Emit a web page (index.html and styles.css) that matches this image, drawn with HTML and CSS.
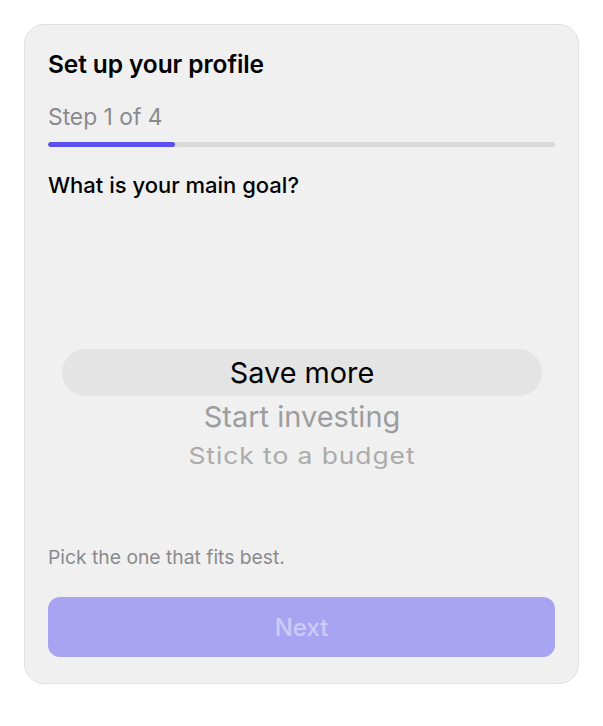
FILE: index.html
```html
<!DOCTYPE html>
<html lang="en">
<head>
<meta charset="utf-8">
<title>Set up your profile</title>
<link rel="stylesheet" href="styles.css">
</head>
<body>
<div class="card">
  <h1 class="title">Set up your profile</h1>
  <div class="step">Step 1 of 4</div>
  <div class="track"><div class="fill" style="width:25%"></div></div>
  <h2 class="question">What is your main goal?</h2>
  <div class="picker">
    <div class="opt selected">Save more</div>
    <div class="opt next1">Start investing</div>
    <div class="opt next2">Stick to a budget</div>
  </div>
  <p class="hint">Pick the one that fits best.</p>
  <button class="next" disabled>Next</button>
</div>
</body>
</html>
```

FILE: styles.css
```css
html, body {
  margin: 0;
  padding: 0;
  background: #ffffff;
  font-family: Inter, "Noto Sans", "Liberation Sans", sans-serif;
}
body {
  padding: 24px;
}
* {
  box-sizing: border-box;
}
.card {
  width: 555px;
  height: 660px;
  padding: 24px 23px 26px;
  background: #f0f0f0;
  border: 1px solid #e0e0e0;
  border-radius: 20px;
  display: flex;
  flex-direction: column;
}
.title {
  margin: 0;
  font-size: 24.5px;
  font-weight: 600;
  color: #000;
  line-height: 30px;
  letter-spacing: -0.1px;
}
.step {
  margin-top: 24px;
  font-size: 22.8px;
  color: #8a8a8e;
  line-height: 28px;
}
.track {
  margin-top: 11px;
  height: 5px;
  background: #d9d9d9;
  border-radius: 3px;
  overflow: hidden;
}
.fill {
  height: 100%;
  background: #5a50ef;
  border-radius: 3px;
}
.question {
  margin: 24px 0 0;
  font-size: 22px;
  font-weight: 500;
  line-height: 28px;
  color: #000;
}
.picker {
  flex: 1;
  display: flex;
  flex-direction: column;
  padding: 150px 13px 0 14px;
}
.opt {
  text-align: center;
  white-space: nowrap;
}
.selected {
  height: 47px;
  line-height: 47px;
  border-radius: 24px;
  background: #e4e4e4;
  font-size: 28.8px;
  color: #000;
}
.next1 {
  font-size: 29px;
  color: #9d9d9d;
  line-height: 42px;
}
.next2 {
  font-size: 23px;
  color: #ababab;
  line-height: 36px;
  letter-spacing: 0.8px;
  transform: scaleX(1.15);
}
.hint {
  margin: 0;
  font-size: 19.3px;
  color: #8a8a8e;
  line-height: 24px;
}
.next {
  margin-top: 28px;
  height: 60px;
  flex: none;
  border: none;
  border-radius: 12px;
  background: #a8a4f2;
  color: #cfcbf8;
  font-family: inherit;
  font-size: 24px;
  font-weight: 500;
}
```
